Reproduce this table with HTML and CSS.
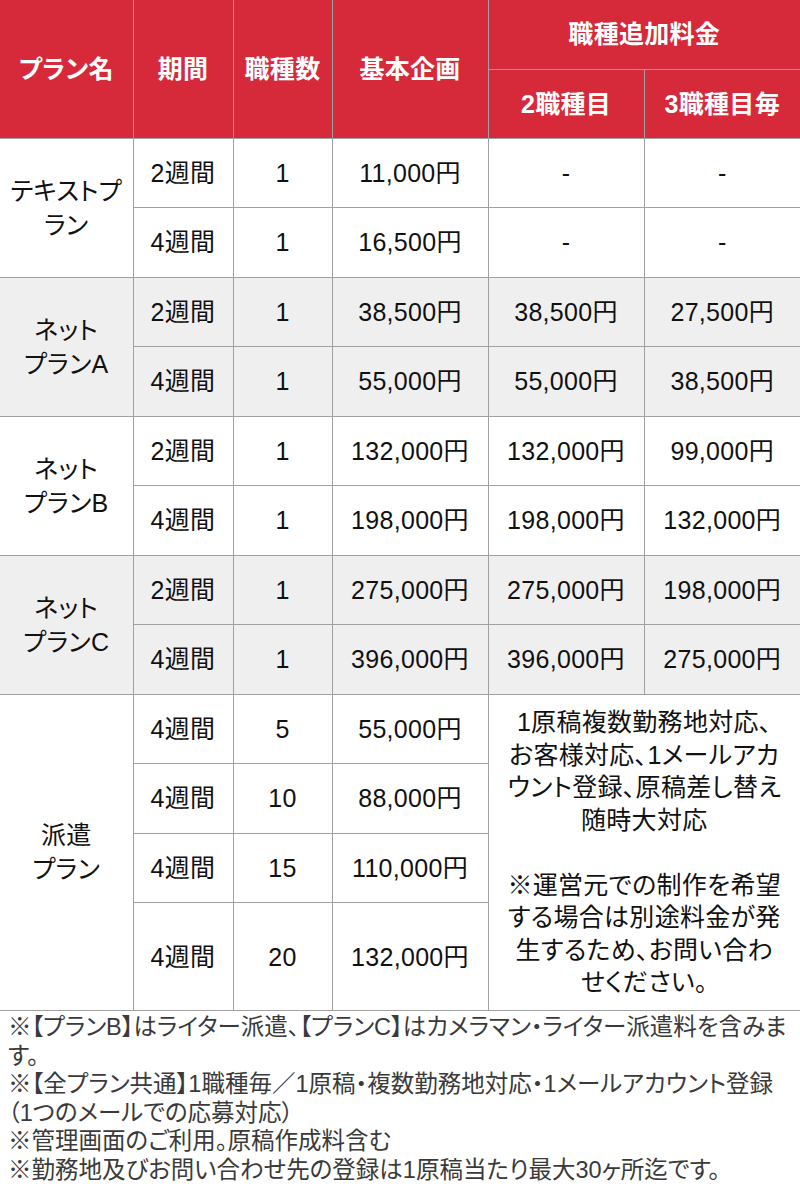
FILE: index.html
```html
<!DOCTYPE html>
<html lang="ja">
<head>
<meta charset="utf-8">
<link rel="stylesheet" href="styles.css">
</head>
<body>
<table class="price">
  <colgroup>
    <col class="c-name"><col class="c-term"><col class="c-num"><col class="c-base"><col class="c-add"><col class="c-add2">
  </colgroup>
  <thead>
    <tr class="hrow">
      <th rowspan="2">プラン名</th>
      <th rowspan="2">期間</th>
      <th rowspan="2">職種数</th>
      <th rowspan="2">基本企画</th>
      <th colspan="2">職種追加料金</th>
    </tr>
    <tr class="hrow">
      <th>2職種目</th>
      <th>3職種目毎</th>
    </tr>
  </thead>
  <tbody>
    <tr>
      <td rowspan="2" class="name">テキストプラン</td>
      <td>2週間</td><td>1</td><td>11,000円</td><td>-</td><td>-</td>
    </tr>
    <tr>
      <td>4週間</td><td>1</td><td>16,500円</td><td>-</td><td>-</td>
    </tr>
    <tr class="alt">
      <td rowspan="2" class="name">ネット<br>プランA</td>
      <td>2週間</td><td>1</td><td>38,500円</td><td>38,500円</td><td>27,500円</td>
    </tr>
    <tr class="alt">
      <td>4週間</td><td>1</td><td>55,000円</td><td>55,000円</td><td>38,500円</td>
    </tr>
    <tr>
      <td rowspan="2" class="name">ネット<br>プランB</td>
      <td>2週間</td><td>1</td><td>132,000円</td><td>132,000円</td><td>99,000円</td>
    </tr>
    <tr>
      <td>4週間</td><td>1</td><td>198,000円</td><td>198,000円</td><td>132,000円</td>
    </tr>
    <tr class="alt">
      <td rowspan="2" class="name">ネット<br>プランC</td>
      <td>2週間</td><td>1</td><td>275,000円</td><td>275,000円</td><td>198,000円</td>
    </tr>
    <tr class="alt">
      <td>4週間</td><td>1</td><td>396,000円</td><td>396,000円</td><td>275,000円</td>
    </tr>
    <tr>
      <td rowspan="4" class="name">派遣<br>プラン</td>
      <td>4週間</td><td>5</td><td>55,000円</td>
      <td rowspan="4" colspan="2" class="note">1原稿複数勤務地対応、<br>お客様対応、1メールアカ<br>ウント登録、原稿差し替え<br>随時大対応<br><br>※運営元での制作を希望<br>する場合は別途料金が発<br>生するため、お問い合わ<br>せください。</td>
    </tr>
    <tr>
      <td>4週間</td><td>10</td><td>88,000円</td>
    </tr>
    <tr>
      <td>4週間</td><td>15</td><td>110,000円</td>
    </tr>
    <tr class="tall">
      <td>4週間</td><td>20</td><td>132,000円</td>
    </tr>
  </tbody>
</table>
<div class="notes">
  <p>※【プランB】はライター派遣、【プランC】はカメラマン・ライター派遣料を含みま<br>す。</p>
  <p>※【全プラン共通】1職種毎／1原稿・複数勤務地対応・1メールアカウント登録<br>（1つのメールでの応募対応）</p>
  <p>※管理画面のご利用。原稿作成料含む</p>
  <p>※勤務地及びお問い合わせ先の登録は1原稿当たり最大30ヶ所迄です。</p>
</div>
</body>
</html>
```

FILE: styles.css
```css
html, body {
  margin: 0;
  padding: 0;
  background: #ffffff;
}
body {
  width: 800px;
  font-family: "Liberation Sans", "Noto Sans CJK JP", sans-serif;
  color: #111111;
}
.price {
  width: 800px;
  border-collapse: collapse;
  table-layout: fixed;
  font-size: 25px;
  font-feature-settings: "palt";
  letter-spacing: 0.3px;
}
.c-name { width: 133px; }
.c-term { width: 100px; }
.c-num { width: 99px; }
.c-base { width: 156px; }
.c-add { width: 156px; }
.c-add2 { width: 156px; }
.price th,
.price td {
  border: 1px solid #a0a0a0;
  padding: 0 4px;
  text-align: center;
  vertical-align: middle;
  line-height: 32px;
}
.price th {
  background: #d62a3b;
  color: #ffffff;
  font-weight: bold;
  font-size: 25px;
}
.price thead tr:first-child th {
  border-top: none;
}
.price tr > :first-child {
  border-left: none;
}
.price tr > :last-child {
  border-right: none;
}
.price .note {
  border-right: none;
}
.hrow { height: 69px; }
.price tbody tr { height: 69.5px; }
.price tbody tr.tall { height: 108px; }
.price .alt td { background: #efefef; }
.price .name {
  line-height: 34px;
  background: #ffffff;
}
.price .alt .name { background: #efefef; }
.price .note {
  line-height: 32.5px;
  padding: 6px 2px;
  white-space: nowrap;
}
.notes {
  padding: 2px 0 0 8px;
  font-family: "Liberation Sans", "Noto Sans CJK JP", sans-serif;
  font-feature-settings: "palt";
  font-size: 23.5px;
  line-height: 28.5px;
  color: #3a3a3a;
  white-space: nowrap;
}
.notes p {
  margin: 0;
}
```
